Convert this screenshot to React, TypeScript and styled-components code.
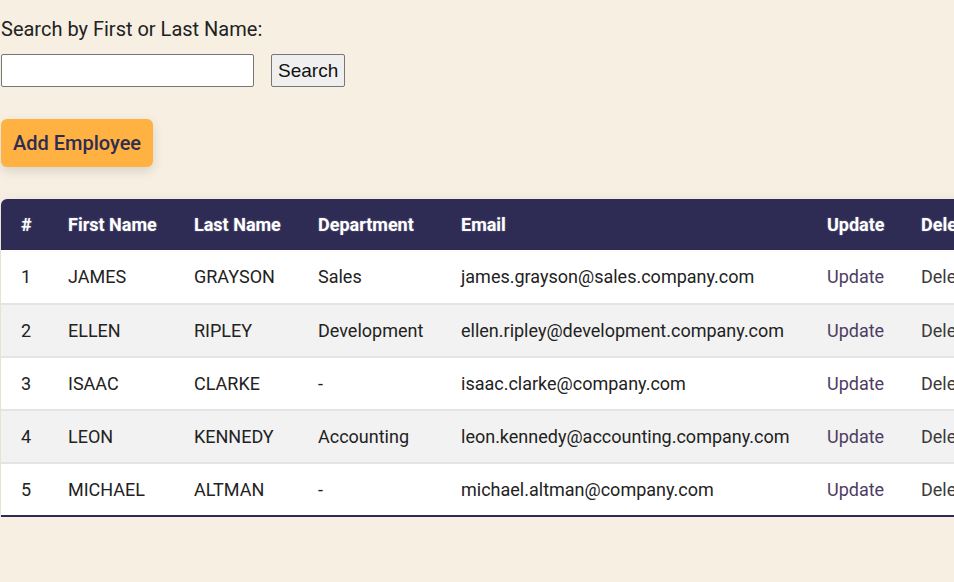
import React from "react";
import styled, { createGlobalStyle } from "styled-components";

const Global = createGlobalStyle`
  html, body { margin: 0; padding: 0; overflow: hidden; }
  body { background: #f6efe2; font-family: Roboto, "Noto Sans", Arial, sans-serif; color: #222; }
`;

const Page = styled.div`
  padding: 17px 0 0 1px;
  width: 1100px;
`;

const Label = styled.label`
  display: block;
  font-size: 20px;
  line-height: 24px;
  color: #222;
`;

const SearchRow = styled.div`
  display: flex;
  align-items: center;
  gap: 17px;
  margin-top: 13px;
`;

const SearchInput = styled.input`
  box-sizing: border-box;
  width: 253px;
  height: 33px;
  border: 1px solid #767676;
  border-radius: 2px;
  background: #fff;
  padding: 2px 4px;
  font-size: 18px;
`;

const SearchButton = styled.button`
  box-sizing: border-box;
  height: 33px;
  padding: 0 6px;
  font-family: "Liberation Sans", Arial, sans-serif;
  font-size: 19px;
  color: #111;
  background: #efefef;
  border: 1px solid #767676;
  border-radius: 2px;
`;

const AddButton = styled.button`
  display: block;
  box-sizing: border-box;
  margin-top: 32px;
  width: 152px;
  height: 48px;
  border: none;
  border-radius: 6px;
  background: #ffb141;
  color: #2e2c54;
  font-family: Roboto, sans-serif;
  font-weight: 500;
  font-size: 20px;
  box-shadow: 0 4px 12px rgba(0, 0, 0, 0.12);
`;

const Table = styled.table`
  margin-top: 32px;
  border-collapse: separate;
  border-spacing: 0;
  width: 1000px;
  table-layout: fixed;
  background: #fff;
  border-radius: 6px 6px 0 0;
  box-shadow: 0 6px 16px rgba(0, 0, 0, 0.12);
  border-bottom: 2px solid #2e2c54;
`;

const HeadRow = styled.tr`
  background: #2e2c54;
`;

const Th = styled.th<{ $w: number; $first?: boolean }>`
  width: ${(p) => p.$w}px;
  height: 51px;
  box-sizing: border-box;
  padding: 0 0 0 20px;
  text-align: left;
  font-size: 18px;
  font-weight: 700;
  color: #fff;
  text-shadow: 0 0 2px rgba(255, 255, 255, 0.35);
  border-top-left-radius: ${(p) => (p.$first ? "6px" : "0")};
`;

const Row = styled.tr<{ $alt: boolean }>`
  background: ${(p) => (p.$alt ? "#f2f2f2" : "#fff")};
`;

const Td = styled.td<{ $first?: boolean }>`
  height: 53px;
  box-sizing: border-box;
  padding: 0 0 0 20px;
  font-size: 18px;
  color: #222;
  border-top: ${(p) => (p.$first ? "none" : "2px solid #e4e4e4")};
  white-space: nowrap;
`;

const Link = styled.span<{ $tone: "update" | "delete" }>`
  color: ${(p) => (p.$tone === "update" ? "#4d3d62" : "#3a3a3a")};
`;

const columns = [
  { label: "#", w: 47 },
  { label: "First Name", w: 126 },
  { label: "Last Name", w: 124 },
  { label: "Department", w: 143 },
  { label: "Email", w: 366 },
  { label: "Update", w: 94 },
  { label: "Delete", w: 100 },
];

const rows = [
  ["1", "JAMES", "GRAYSON", "Sales", "james.grayson@sales.company.com"],
  ["2", "ELLEN", "RIPLEY", "Development", "ellen.ripley@development.company.com"],
  ["3", "ISAAC", "CLARKE", "-", "isaac.clarke@company.com"],
  ["4", "LEON", "KENNEDY", "Accounting", "leon.kennedy@accounting.company.com"],
  ["5", "MICHAEL", "ALTMAN", "-", "michael.altman@company.com"],
];

export default function App() {
  return (
    <>
      <Global />
      <Page>
        <Label htmlFor="search">Search by First or Last Name:</Label>
        <SearchRow>
          <SearchInput id="search" type="text" />
          <SearchButton>Search</SearchButton>
        </SearchRow>
        <AddButton>Add Employee</AddButton>
        <Table>
          <thead>
            <HeadRow>
              {columns.map((c, i) => (
                <Th key={c.label} $w={c.w} $first={i === 0}>
                  {c.label}
                </Th>
              ))}
            </HeadRow>
          </thead>
          <tbody>
            {rows.map((r, i) => (
              <Row key={r[0]} $alt={i % 2 === 1}>
                {r.map((v, j) => (
                  <Td key={j} $first={i === 0}>
                    {v}
                  </Td>
                ))}
                <Td $first={i === 0}>
                  <Link $tone="update">Update</Link>
                </Td>
                <Td $first={i === 0}>
                  <Link $tone="delete">Delete</Link>
                </Td>
              </Row>
            ))}
          </tbody>
        </Table>
      </Page>
    </>
  );
}
